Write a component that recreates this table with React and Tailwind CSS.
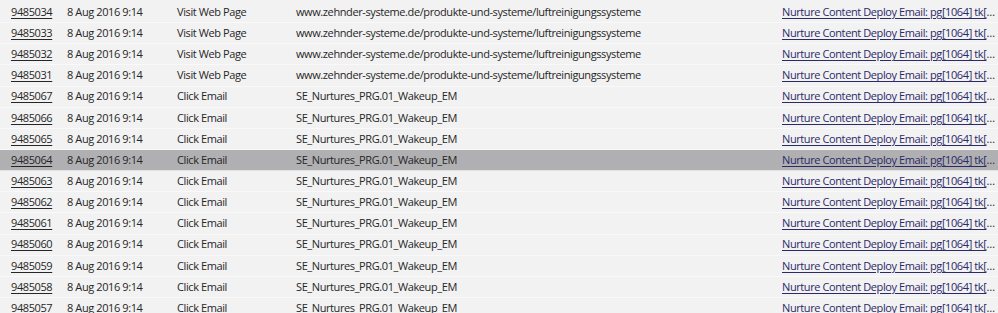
const web = "www.zehnder-systeme.de/produkte-und-systeme/luftreinigungssysteme";
const click = "SE_Nurtures_PRG.01_Wakeup_EM";

const rows = [
    ["9485034", "Visit Web Page", web],
    ["9485033", "Visit Web Page", web],
    ["9485032", "Visit Web Page", web],
    ["9485031", "Visit Web Page", web],
    ["9485067", "Click Email", click],
    ["9485066", "Click Email", click],
    ["9485065", "Click Email", click],
    ["9485064", "Click Email", click],
    ["9485063", "Click Email", click],
    ["9485062", "Click Email", click],
    ["9485061", "Click Email", click],
    ["9485060", "Click Email", click],
    ["9485059", "Click Email", click],
    ["9485058", "Click Email", click],
    ["9485057", "Click Email", click],
];

const App = () => {
    return (
        <div
            className="w-[998px] h-[313px] overflow-hidden bg-[#f2f2f2] text-[11px] tracking-[-0.4px] text-[#262626]"
            style={{ fontFamily: '"Open Sans", "Liberation Sans", sans-serif' }}
        >
            <div className="pt-[2px]">
                {rows.map(([id, activity, detail]) => (
                    <div
                        key={id}
                        className={
                            id === "9485064"
                                ? "flex items-center h-[21.15px] border-b border-[#e2e2e2] bg-[#b0b0b2] whitespace-nowrap"
                                : "flex items-center h-[21.15px] border-b border-[#f9f9f9] whitespace-nowrap"
                        }
                    >
                        <div className="w-[67px] pl-[11px] shrink-0">
                            <span className="underline underline-offset-2">{id}</span>
                        </div>
                        <div className="w-[110px] shrink-0">8 Aug 2016 9:14</div>
                        <div className="w-[119px] shrink-0">{activity}</div>
                        <div className="w-[486px] shrink-0">{detail}</div>
                        <div className="flex-1 min-w-0 overflow-hidden text-ellipsis">
                            <span className="text-[#2b2968] underline underline-offset-2">
                                Nurture Content Deploy Email: pg[1064] tk[1064] ca[1064] SE_Nurtures_PRG.01_Wakeup_EM
                            </span>
                        </div>
                    </div>
                ))}
            </div>
        </div>
    );
};

export default App;
